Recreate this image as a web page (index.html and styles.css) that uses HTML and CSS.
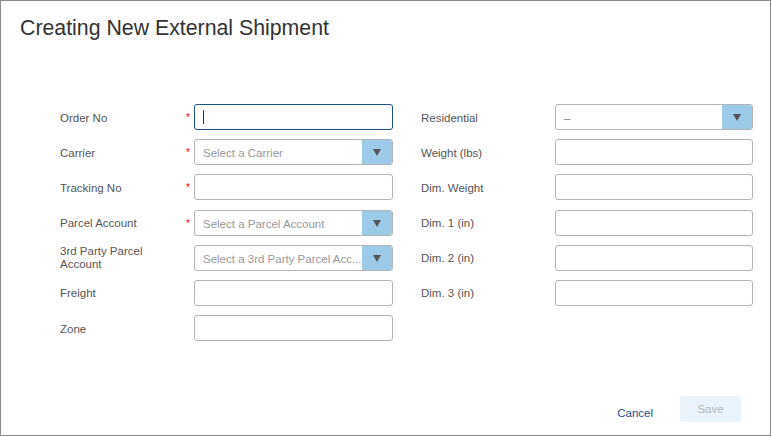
FILE: index.html
```html
<!DOCTYPE html>
<html lang="en">
<head>
  <meta charset="UTF-8" />
  <title>Creating New External Shipment</title>
  <link rel="stylesheet" href="styles.css">
</head>
<body>

<div class="dialog">
  <h2 class="title">Creating New External Shipment</h2>

  <div class="form">
    <div class="col left">
      <label>Order No</label><span class="req">*</span>
      <div class="field focused"><input type="text"><span class="caret"></span></div>

      <label>Carrier</label><span class="req">*</span>
      <div class="select"><span class="placeholder">Select a Carrier</span><span class="arrow"></span></div>

      <label>Tracking No</label><span class="req">*</span>
      <input type="text">

      <label>Parcel Account</label><span class="req">*</span>
      <div class="select"><span class="placeholder">Select a Parcel Account</span><span class="arrow"></span></div>

      <label class="two-line">3rd Party Parcel Account</label><span></span>
      <div class="select"><span class="placeholder">Select a 3rd Party Parcel Acc...</span><span class="arrow"></span></div>

      <label>Freight</label><span></span>
      <input type="text">

      <label>Zone</label><span></span>
      <input type="text">
    </div>

    <div class="col right">
      <label>Residential</label>
      <div class="select"><span class="value">–</span><span class="arrow"></span></div>

      <label>Weight (lbs)</label>
      <input type="text">

      <label>Dim. Weight</label>
      <input type="text">

      <label>Dim. 1 (in)</label>
      <input type="text">

      <label>Dim. 2 (in)</label>
      <input type="text">

      <label>Dim. 3 (in)</label>
      <input type="text">
    </div>
  </div>

  <div class="footer">
    <button class="link">Cancel</button>
    <button class="save" disabled>Save</button>
  </div>
</div>

</body>
</html>
```

FILE: styles.css
```css
* { box-sizing: border-box; }

html, body {
  margin: 0;
  height: 100%;
  background: #fff;
}

body {
  font-family: "Liberation Sans", Arial, sans-serif;
}

.dialog {
  height: 436px;
  border: 1px solid #8a8a8a;
  display: flex;
  flex-direction: column;
}

.title {
  margin: 0;
  padding: 15px 0 0 19px;
  font-size: 21.3px;
  font-weight: normal;
  color: #333;
  line-height: 24px;
}

.form {
  display: flex;
  gap: 28px;
  padding: 64px 0 0 59px;
}

.col {
  display: grid;
  align-items: center;
  row-gap: 9.2px;
  grid-auto-rows: 26px;
}

.left { grid-template-columns: 126px 8px 199px; }
.right { grid-template-columns: 134px 198px; }

label {
  font-size: 11.5px;
  color: #555;
  line-height: 13px;
  padding-top: 2px;
}

.two-line {
  max-width: 100px;
  padding-top: 0;
}

.req {
  color: #e00;
  font-size: 10px;
  line-height: 10px;
  align-self: start;
  padding-top: 9px;
}

input[type="text"] {
  width: 100%;
  height: 26px;
  border: 1px solid #b3b3b3;
  border-radius: 3px;
  padding: 0 8px;
  font-family: inherit;
  font-size: 12px;
  outline: none;
}

.field {
  position: relative;
  height: 26px;
}

.focused input[type="text"] {
  border-color: #1a4f8c;
}

.caret {
  position: absolute;
  left: 9px;
  top: 6px;
  width: 1px;
  height: 14px;
  background: #333;
}

.select {
  display: flex;
  height: 26px;
  border: 1px solid #b3b3b3;
  border-radius: 3px;
  overflow: hidden;
}

.placeholder,
.value {
  flex: 1;
  min-width: 0;
  padding: 1px 4px 0 8px;
  line-height: 24px;
  font-size: 11.5px;
  color: #999;
  white-space: nowrap;
  overflow: hidden;
}

.value { color: #777; }

.arrow {
  width: 30px;
  background: #9ccbea;
  display: flex;
  align-items: center;
  justify-content: center;
}

.arrow::before {
  content: "";
  border-left: 4.5px solid transparent;
  border-right: 4.5px solid transparent;
  border-top: 7px solid #555;
  margin-top: 1px;
}

.footer {
  margin-top: auto;
  display: flex;
  justify-content: flex-end;
  align-items: center;
  gap: 27px;
  padding: 0 29px 13px 0;
}

button {
  font-family: inherit;
  font-size: 11.5px;
  border: none;
  cursor: pointer;
}

.link {
  background: none;
  color: #1d4b8f;
  padding: 0;
  margin-top: 8px;
}

.save {
  width: 61px;
  height: 26px;
  border-radius: 3px;
  background: #eaf4fd;
  color: #b5b5b5;
}
```
